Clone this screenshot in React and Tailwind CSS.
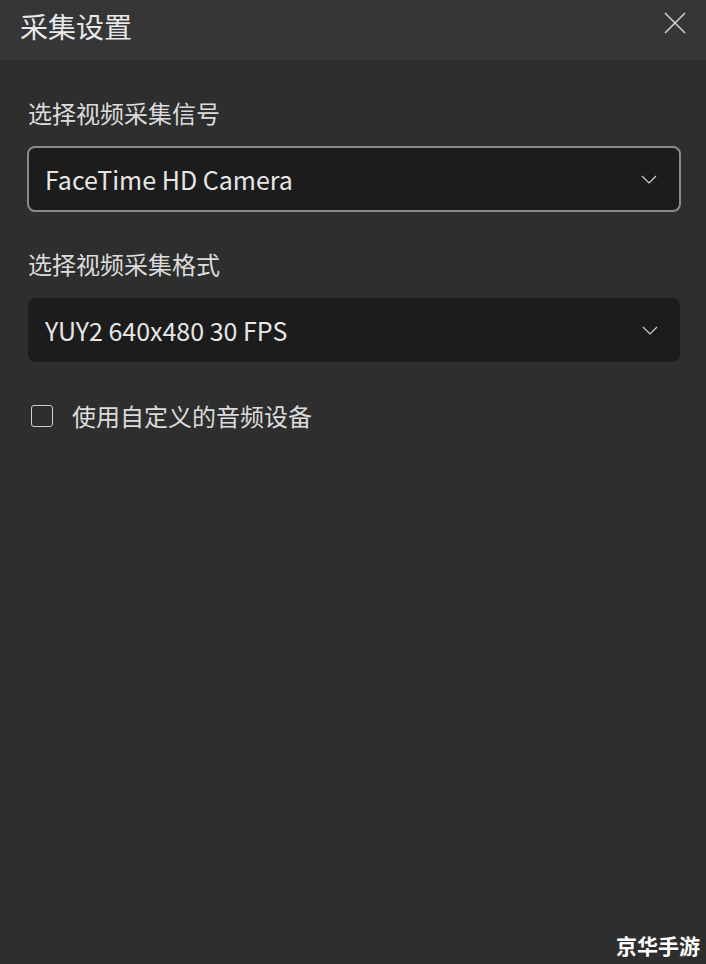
const FONT = { fontFamily: '"Noto Sans CJK SC", "Noto Sans", sans-serif' };

const Chevron = () => (
  <svg width="16" height="9" viewBox="0 0 16 9" fill="none" className="text-[#d0d0d0]">
    <polyline points="1,1 8,8 15,1" stroke="currentColor" strokeWidth="1.2" />
  </svg>
);

const Select = ({ value, bordered }) => (
  <div
    className={`flex items-center justify-between rounded-lg bg-[#1c1c1c] pl-[16px] pr-[22px] ${
      bordered ? 'h-[66px] border-2 border-[#8a8a8a]' : 'mx-px h-[64px] pl-[17px]'
    }`}
  >
    <span className="text-[25px] leading-none text-[#e6e6e6]">{value}</span>
    <Chevron />
  </div>
);

export default function App() {
  return (
    <div className="relative flex h-[964px] w-[706px] flex-col bg-[#2e2e2e]" style={FONT}>
      <header className="flex h-[60px] items-center justify-between bg-[#363636] pl-[20px] pr-[20px]">
        <h1 className="-mt-[9px] text-[28px] leading-none text-[#e8e8e8]">采集设置</h1>
        <svg width="22" height="22" viewBox="0 0 22 22" className="-mt-[14px] text-[#d8d8d8]">
          <line x1="1" y1="1" x2="21" y2="21" stroke="currentColor" strokeWidth="1.4" />
          <line x1="21" y1="1" x2="1" y2="21" stroke="currentColor" strokeWidth="1.4" />
        </svg>
      </header>

      <main className="flex flex-col pl-[27px] pr-[25px]">
        <label className="mt-[41px] ml-px text-[24px] leading-none text-[#dcdcdc]">选择视频采集信号</label>
        <div className="mt-[21px]">
          <Select value="FaceTime HD Camera" bordered />
        </div>

        <label className="mt-[40px] ml-px text-[24px] leading-none text-[#dcdcdc]">选择视频采集格式</label>
        <div className="mt-[22px]">
          <Select value="YUY2 640x480 30 FPS" />
        </div>

        <div className="mt-[42px] flex items-center gap-[19px] pl-[4px]">
          <span className="h-[22px] w-[22px] rounded-[3px] border-[1.5px] border-[#cfcfcf]" />
          <span className="text-[24px] leading-none text-[#dcdcdc]">使用自定义的音频设备</span>
        </div>
      </main>

      <div className="absolute bottom-[8px] right-[6px] text-[21px] font-bold leading-none text-white">京华手游</div>
    </div>
  );
}
